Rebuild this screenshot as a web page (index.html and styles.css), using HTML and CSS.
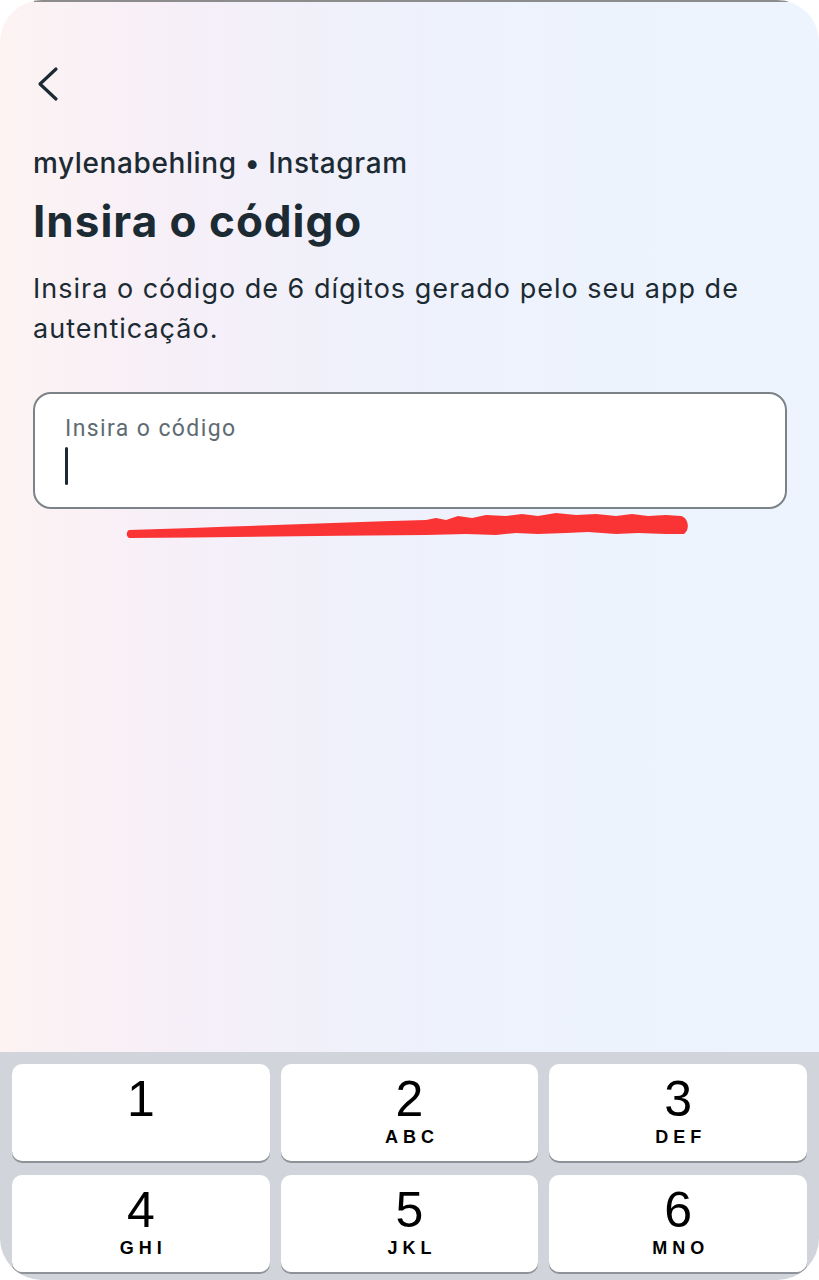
FILE: index.html
```html
<!DOCTYPE html>
<html>
<head>
<meta name="viewport" content="width=device-width, initial-scale=1.0">
<link rel="stylesheet" href="styles.css">
</head>
<body>

<div class="phone">

  <div class="content">
    <!--back arrow-->
    <svg class="back" width="26" height="36" viewBox="0 0 26 36">
      <path d="M21 3 L5 18 L21 33" fill="none" stroke="#1c2b33" stroke-width="3.2" stroke-linecap="round" stroke-linejoin="round"/>
    </svg>

    <p class="account">mylenabehling • Instagram</p>
    <h1 class="title">Insira o código</h1>
    <p class="desc">Insira o código de 6 dígitos gerado pelo seu app de autenticação.</p>

    <div class="field">
      <span class="label">Insira o código</span>
      <span class="cursor"></span>
    </div>

    <!--red scribble under the field-->
    <svg class="scribble" width="566" height="30" viewBox="0 0 566 30">
      <path d="M3 20 C100 17 200 13 300 10 L310 8 L320 10 L332 6 L346 8 L360 5 L380 6 L396 4 L412 6 L430 3 L450 5 L470 4 L490 6 L506 4 L522 6 L540 5 L555 6 C563 8 564 20 558 24 L540 24 L512 23 L490 24 L462 22 L440 23 L412 24 L390 23 L370 25 L340 24 L300 25 C200 26 100 27 3 28 C0 26 0 22 3 20 Z" fill="#fa3434"/>
    </svg>
  </div>

  <div class="spacer"></div>

  <div class="keyboard">
    <div class="key"><span class="num">1</span><span class="letters">&nbsp;</span></div>
    <div class="key"><span class="num">2</span><span class="letters">ABC</span></div>
    <div class="key"><span class="num">3</span><span class="letters">DEF</span></div>
    <div class="key"><span class="num">4</span><span class="letters">GHI</span></div>
    <div class="key"><span class="num">5</span><span class="letters">JKL</span></div>
    <div class="key"><span class="num">6</span><span class="letters">MNO</span></div>
  </div>

</div>

</body>
</html>
```

FILE: styles.css
```css
/*page and phone frame*/

* {box-sizing: border-box;}

body{
  margin:0px;
  background:#ffffff;
}

.phone{
  position:relative;
  height:1280px;
  border-radius:42px;
  overflow:hidden;
  display:flex;
  flex-direction:column;
  background:linear-gradient(90deg, #fdf3f3 0%, #f6eff8 22%, #eff1fb 45%, #edf3fd 70%, #edf4fe 100%);
}

/*thin dark line on the top edge*/
.phone::before{
  content:"";
  position:absolute;
  top:0px;
  left:34px;
  right:28px;
  height:2px;
  background:#8c8c8c;
}

.content{
  padding:66px 32px 0px 33px;
  display:flex;
  flex-direction:column;
  font-family:"Inter", "Roboto", sans-serif;
  color:#1c2b33;
}

.back{
  display:block;
  margin-left:2px;
}

.account{
  margin:44px 0px 0px 0px;
  font-size:28px;
  line-height:34px;
  font-weight:500;
  letter-spacing:0.6px;
}

.title{
  margin:15px 0px 0px 0px;
  font-size:44px;
  line-height:52px;
  font-weight:700;
  letter-spacing:1px;
}

.desc{
  margin:22px 0px 0px 0px;
  font-size:27px;
  line-height:40px;
  font-weight:400;
  letter-spacing:1px;
  max-width:740px;
}

/*the code input*/

.field{
  margin-top:43px;
  height:117px;
  background:#ffffff;
  border:2px solid #7b8388;
  border-radius:18px;
  padding:20px 30px 0px 30px;
  display:flex;
  flex-direction:column;
}

.label{
  font-family:"Roboto", sans-serif;
  font-size:23px;
  line-height:30px;
  letter-spacing:1.4px;
  color:#5f6b73;
}

.cursor{
  display:block;
  width:3px;
  height:38px;
  margin-top:3px;
  background:#1c2b33;
  border-radius:2px;
}

.scribble{
  display:block;
  margin:1px 0px 0px 93px;
}

.spacer{
  flex:1;
}

/*number keyboard*/

.keyboard{
  background:#d1d5db;
  padding:12px 12px 0px 12px;
  height:228px;
  display:grid;
  grid-template-columns:1fr 1fr 1fr;
  column-gap:11px;
  row-gap:14px;
  align-content:start;
}

.key{
  background:#ffffff;
  border-radius:10px;
  height:97px;
  box-shadow:0px 2px 0px #8f9399;
  display:flex;
  flex-direction:column;
  align-items:center;
  font-family:"Liberation Sans", Arial, sans-serif;
  color:#000000;
}

.num{
  font-size:50px;
  line-height:50px;
  margin-top:10px;
}

.letters{
  font-size:18px;
  font-weight:700;
  letter-spacing:5px;
  margin-left:5px;
  margin-top:3px;
  line-height:20px;
}
```
